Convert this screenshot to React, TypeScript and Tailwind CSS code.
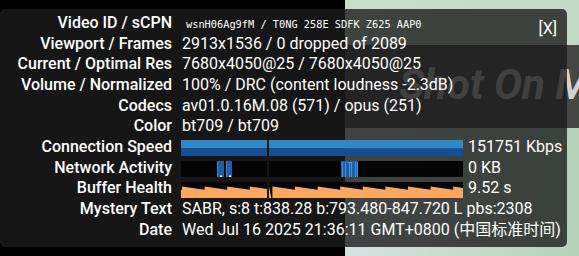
import React from "react";

const GW = 282;
const SPLIT = 86;
const GAP = 2;

function segs() {
  return [
    { x: 0, w: SPLIT },
    { x: SPLIT + GAP, w: GW - SPLIT - GAP },
  ];
}

function ConnectionGraph() {
  return (
    <svg width={GW} height={16} className="block">
      {segs().map((s, i) => (
        <g key={i}>
          <rect x={s.x} y={0} width={s.w} height={8.5} fill="#3088c6" />
          <rect x={s.x} y={8.5} width={s.w} height={7.5} fill="#154e92" />
        </g>
      ))}
    </svg>
  );
}

function NetworkGraph() {
  const bars = [
    { x: 36, w: 7 },
    { x: 45, w: 6 },
  ];
  return (
    <svg width={GW} height={16} className="block">
      {segs().map((s, i) => (
        <rect key={i} x={s.x} y={0} width={s.w} height={16} fill="#050505" />
      ))}
      {bars.map((b, i) => (
        <g key={i}>
          <rect x={b.x} y={0} width={b.w} height={16} fill="#1d5ea8" />
          <rect x={b.x} y={0} width={1} height={16} fill="#3a84c8" />
          <rect x={b.x + Math.floor(b.w / 2)} y={14.5} width={2} height={1.5} fill="#ffffff" />
        </g>
      ))}
      <rect x={160} y={0} width={17} height={16} fill="#1d5ea8" />
      {[161, 164, 168, 170, 174, 176].map((x, i) => (
        <rect key={i} x={x} y={1} width={1} height={15} fill="#4a92d2" />
      ))}
      <rect x={166} y={1} width={4} height={1} fill="#4a92d2" />
    </svg>
  );
}

function bufferPath(x0: number, x1: number, jumps: number[], period: number) {
  const peak = 4.5;
  const trough = 7.8;
  const lvl = (x: number, j: number) => peak + ((trough - peak) * (x - j)) / period;
  const pts: string[] = [];
  pts.push(`${x0},16`);
  const first = jumps[0];
  const prev = first - period;
  let cur = prev;
  pts.push(`${x0},${x0 < first ? lvl(x0, prev).toFixed(2) : peak}`);
  for (const j of jumps) {
    if (j < x0 || j > x1) continue;
    pts.push(`${j},${lvl(j, cur).toFixed(2)}`);
    pts.push(`${j},${peak}`);
    cur = j;
  }
  pts.push(`${x1},${lvl(x1, cur).toFixed(2)}`);
  pts.push(`${x1},16`);
  return pts.join(" ");
}

function BufferGraph() {
  const period = 22.6;
  const jumps: number[] = [];
  for (let x = 1; x < GW; x += period) jumps.push(Math.round(x * 10) / 10);
  return (
    <svg width={GW} height={16} className="block">
      {segs().map((s, i) => (
        <g key={i}>
          <rect x={s.x} y={0} width={s.w} height={16} fill="#050505" />
          <polygon points={bufferPath(s.x, s.x + s.w, jumps, period)} fill="#fca75e" />
        </g>
      ))}
    </svg>
  );
}

type Row = { label: string; value?: string; mono?: boolean; graph?: React.ReactNode };

const rows: Row[] = [
  { label: "Video ID / sCPN", value: "wsnH06Ag9fM / T0NG 258E SDFK Z625 AAP0", mono: true },
  { label: "Viewport / Frames", value: "2913x1536 / 0 dropped of 2089" },
  { label: "Current / Optimal Res", value: "7680x4050@25 / 7680x4050@25" },
  { label: "Volume / Normalized", value: "100% / DRC (content loudness -2.3dB)" },
  { label: "Codecs", value: "av01.0.16M.08 (571) / opus (251)" },
  { label: "Color", value: "bt709 / bt709" },
  { label: "Connection Speed", value: "151751 Kbps", graph: <ConnectionGraph /> },
  { label: "Network Activity", value: "0 KB", graph: <NetworkGraph /> },
  { label: "Buffer Health", value: "9.52 s", graph: <BufferGraph /> },
  { label: "Mystery Text", value: "SABR, s:8 t:838.28 b:793.480-847.720 L pbs:2308" },
  { label: "Date", value: "Wed Jul 16 2025 21:36:11 GMT+0800 (中国标准时间)" },
];

export default function App() {
  return (
    <div className="relative w-[579px] h-[256px] overflow-hidden bg-black flex font-[family-name:Roboto,'Noto_Sans_CJK_SC',sans-serif]">
      <div className="w-[345px] flex-none bg-black" />
      <div className="flex-1 flex flex-col bg-gradient-to-br from-[#c9dfcc] via-[#c2dac6] to-[#b0d0b2]">
        <div className="h-[45px] flex-none" />
        <div className="h-[83px] flex-none bg-[#444744] pl-[54px] pt-[19px] overflow-hidden">
          <div className="whitespace-nowrap text-[42px] leading-[42px] font-bold italic text-[#d2d2d2]">
            Shot On M
          </div>
        </div>
        <div className="flex-1 bg-gradient-to-r from-[#d6e2e2] to-[#b4d2b6]" />
      </div>

      <div className="absolute left-0 top-[9px] w-[567px] h-[238px] rounded-[5px] bg-[rgba(28,28,28,0.8)] pt-[4px] text-white">
        <div className="absolute right-[10px] top-[10px] text-[16px] leading-[20.67px]">[X]</div>
        {rows.map((r) =>
          r.graph ? (
            <div key={r.label} className="flex items-center h-[20.67px]">
              <div className="w-[172px] flex-none text-right text-[16px] leading-[20.67px] font-medium whitespace-nowrap">
                {r.label}
              </div>
              <div className="ml-[9px] mt-[2px] flex-none">{r.graph}</div>
              <div className="ml-[5px] text-[16px] leading-[20.67px] whitespace-nowrap">{r.value}</div>
            </div>
          ) : (
            <div key={r.label} className="flex items-baseline h-[20.67px]">
              <div className="w-[172px] flex-none text-right text-[16px] leading-[20.67px] font-medium whitespace-nowrap">
                {r.label}
              </div>
              <div
                className={
                  r.mono
                    ? "ml-[14px] whitespace-nowrap text-[10.3px] leading-[20.67px] font-[family-name:'DejaVu_Sans_Mono',monospace]"
                    : "ml-[10px] whitespace-nowrap text-[16px] leading-[20.67px]"
                }
              >
                {r.value}
              </div>
            </div>
          )
        )}
      </div>
    </div>
  );
}
